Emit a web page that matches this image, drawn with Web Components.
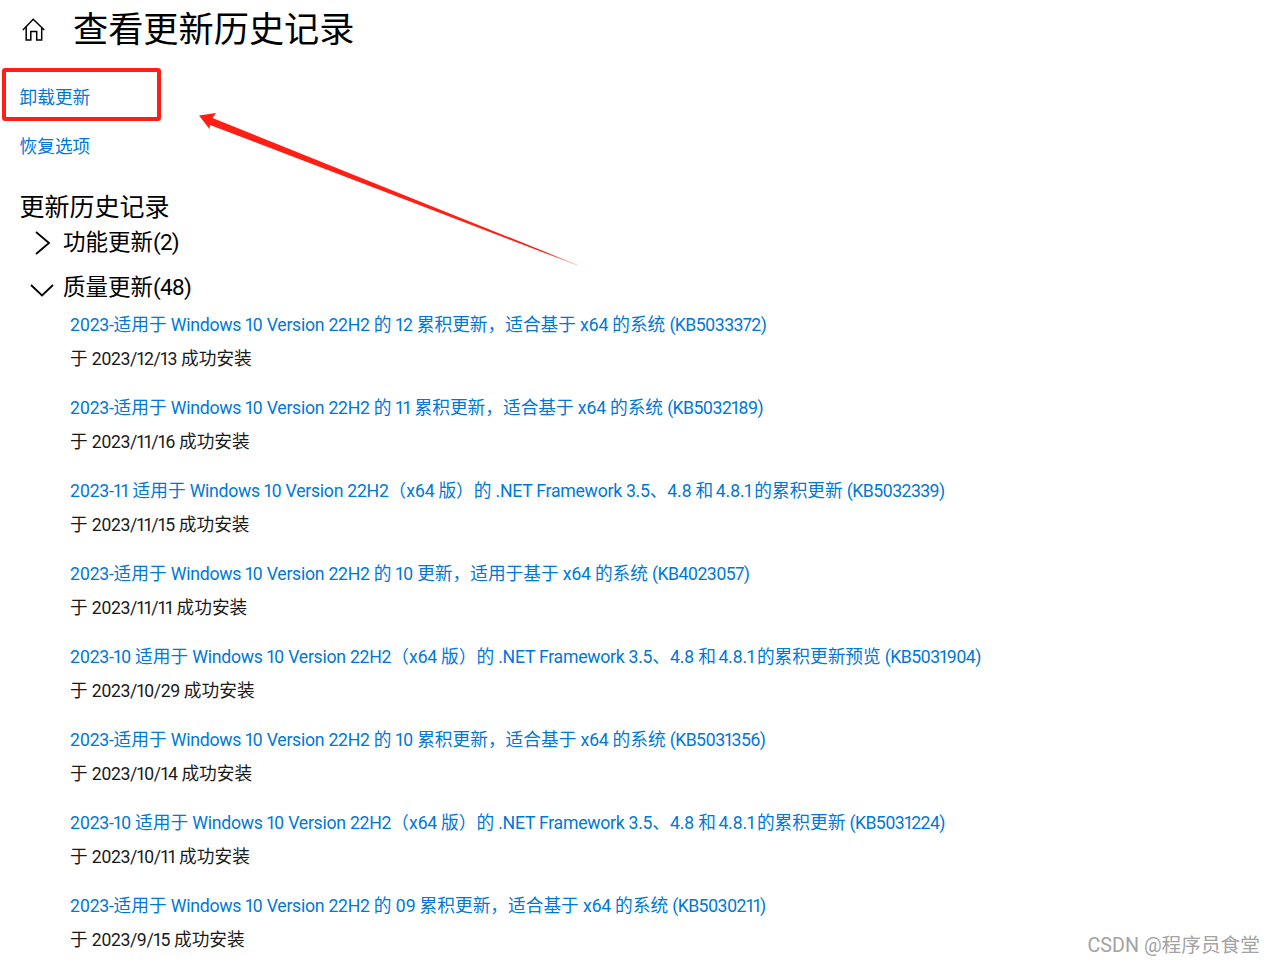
<!DOCTYPE html>
<html lang="zh-CN">
<head>
<meta charset="utf-8">
<title>查看更新历史记录</title>
<style>
  html, body { margin: 0; background: #fff; height: 964px; overflow: hidden; }
  body { font-family: Roboto, "Noto Sans CJK SC", sans-serif; font-variant-numeric: proportional-nums; position: relative; }
</style>
</head>
<body>
<history-page></history-page>

<script>
// latin runs are set tighter than the CJK ones, Roboto is a bit wider than the original face
const tightLatin = text => text
  .replace(/[\x20-\x7e]+/g, m => `<span class="en${m.trim() === "4.8.1" ? " ver" : ""}">${m}</span>`)
  .replace(/\(KB\d+\)/g, m => `<span class="kb">${m}</span>`);

class PageHeader extends HTMLElement {
  constructor() {
    super();
    this.attachShadow({ mode: "open" });
  }
  connectedCallback() {
    this.shadowRoot.innerHTML = `
      <style>
        :host { display: flex; align-items: center; height: 58px; padding-left: 22px; }
        svg { width: 24px; height: 24px; display: block; margin-top: 2px; }
        h1 { margin: 0 0 0 27px; padding-top: 2px; font-size: 35.200px; font-weight: 400; line-height: 56px; color: #000; }
      </style>
      <svg viewBox="0 0 24 24" fill="none" stroke="#000" stroke-width="1.500">
        <path d="M.9 12 11.200 1.200 22.300 12M4.200 8.800V22h4.600v-8.500h5.900V22h5V8.800"/>
      </svg>
      <h1><slot></slot></h1>
    `;
  }
}
customElements.define("page-header", PageHeader);

class SideLink extends HTMLElement {
  constructor() {
    super();
    this.attachShadow({ mode: "open" });
  }
  connectedCallback() {
    this.shadowRoot.innerHTML = `
      <style>
        :host { display: block; font-size: 17.700px; line-height: 49px; color: #0078d7; padding-left: 19.500px; }
      </style>
      <slot></slot>
    `;
  }
}
customElements.define("side-link", SideLink);

class UpdateGroup extends HTMLElement {
  constructor() {
    super();
    this.attachShadow({ mode: "open" });
  }
  connectedCallback() {
    const open = this.hasAttribute("open");
    const chevron = open
      ? `<path d="M1 11l11 10.500L23 11"/>`
      : `<path d="M6 3l13 11L6 25"/>`;
    this.shadowRoot.innerHTML = `
      <style>
        :host { display: block; }
        .head { display: flex; align-items: center; height: 44px; padding-left: 30px; font-size: 22.500px; color: #000; }
        .en { letter-spacing: -.8px; }
        svg { width: 26px; height: 28px; display: block; flex: none; margin: 6px 7px 0 0; }
        .items { display: flex; flex-direction: column; gap: 15px; padding: 1.500px 0 0 70px; }
      </style>
      <div class="head">
        <svg viewBox="0 0 26 28" fill="none" stroke="#000" stroke-width="1.800">${chevron}</svg>
        <span>${tightLatin(this.getAttribute("label"))}</span>
      </div>
      <div class="items"><slot></slot></div>
    `;
  }
}
customElements.define("update-group", UpdateGroup);

class UpdateItem extends HTMLElement {
  constructor() {
    super();
    this.attachShadow({ mode: "open" });
  }
  connectedCallback() {
    this.shadowRoot.innerHTML = `
      <style>
        :host { display: block; font-size: 17.700px; white-space: nowrap; }
        div { line-height: 33.500px; }
        .en { letter-spacing: -.28px; }
        .ver { word-spacing: -1.500px; }
        .kb { letter-spacing: -.6px; }
        .link { color: #0078d7; }
        .date { color: #1a1a1a; padding-top: 1px; }
        .date .en { letter-spacing: -.45px; }
      </style>
      <div class="link">${tightLatin(this.getAttribute("title"))}</div>
      <div class="date">${tightLatin(this.getAttribute("date"))}</div>
    `;
  }
}
customElements.define("update-item", UpdateItem);

class HistoryPage extends HTMLElement {
  constructor() {
    super();
    this.attachShadow({ mode: "open" });
  }
  connectedCallback() {
    const items = [
      ["2023-适用于 Windows 10 Version 22H2 的 12 累积更新，适合基于 x64 的系统 (KB5033372)", "于 2023/12/13 成功安装"],
      ["2023-适用于 Windows 10 Version 22H2 的 11 累积更新，适合基于 x64 的系统 (KB5032189)", "于 2023/11/16 成功安装"],
      ["2023-11 适用于 Windows 10 Version 22H2（x64 版）的 .NET Framework 3.5、4.8 和 4.8.1 的累积更新 (KB5032339)", "于 2023/11/15 成功安装"],
      ["2023-适用于 Windows 10 Version 22H2 的 10 更新，适用于基于 x64 的系统 (KB4023057)", "于 2023/11/11 成功安装"],
      ["2023-10 适用于 Windows 10 Version 22H2（x64 版）的 .NET Framework 3.5、4.8 和 4.8.1 的累积更新预览 (KB5031904)", "于 2023/10/29 成功安装"],
      ["2023-适用于 Windows 10 Version 22H2 的 10 累积更新，适合基于 x64 的系统 (KB5031356)", "于 2023/10/14 成功安装"],
      ["2023-10 适用于 Windows 10 Version 22H2（x64 版）的 .NET Framework 3.5、4.8 和 4.8.1 的累积更新 (KB5031224)", "于 2023/10/11 成功安装"],
      ["2023-适用于 Windows 10 Version 22H2 的 09 累积更新，适合基于 x64 的系统 (KB5030211)", "于 2023/9/15 成功安装"]
    ];
    this.shadowRoot.innerHTML = `
      <style>
        :host { display: block; position: relative; height: 964px; overflow: hidden; }
        .links { margin-top: 16px; }
        h2 { margin: 12px 0 0 19.500px; font-size: 25px; font-weight: 400; line-height: 48px; color: #000; }
        .groups { margin-top: -14.500px; }
        .mark { position: absolute; left: 2px; top: 68px; width: 159px; height: 53px; box-sizing: border-box; border: 4px solid #ff1f14; border-radius: 3px; }
        .arrow { position: absolute; left: 0; top: 0; width: 1275px; height: 964px; pointer-events: none; }
        .watermark { position: absolute; right: 15px; top: 933px; font-size: 19.700px; line-height: 26px; color: #a3a3a3; }
      </style>
      <page-header>查看更新历史记录</page-header>
      <div class="links">
        <side-link>卸载更新</side-link>
        <side-link>恢复选项</side-link>
      </div>
      <h2>更新历史记录</h2>
      <div class="groups">
        <update-group label="功能更新(2)"></update-group>
        <update-group label="质量更新(48)" open>
          ${items.map(i => `<update-item title="${i[0]}" date="${i[1]}"></update-item>`).join("")}
        </update-group>
      </div>
      <div class="mark"></div>
      <svg class="arrow" viewBox="0 0 1275 964">
        <defs>
          <linearGradient id="fade" gradientUnits="userSpaceOnUse" x1="545" y1="252" x2="578" y2="265">
            <stop offset="0" stop-color="#ff1f14"/>
            <stop offset="1" stop-color="#ff1f14" stop-opacity="0.25"/>
          </linearGradient>
        </defs>
        <path fill="url(#fade)" d="M199 115.500 216 113 212.500 118 578 265 577.500 265.500 210 125 209.500 129Z"/>
      </svg>
      <div class="watermark">CSDN @程序员食堂</div>
    `;
  }
}
customElements.define("history-page", HistoryPage);
</script>
</body>
</html>
